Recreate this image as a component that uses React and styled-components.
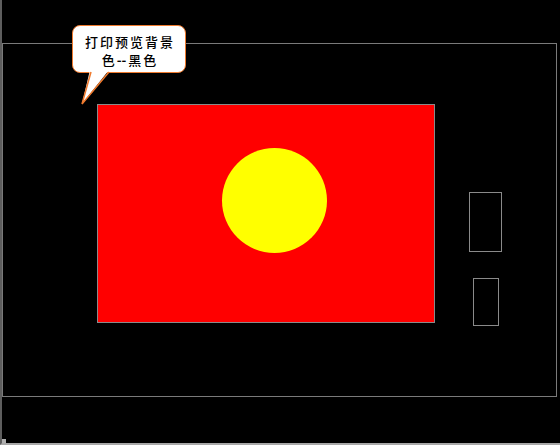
import React from 'react';
import styled, { createGlobalStyle } from 'styled-components';

const GlobalStyle = createGlobalStyle`
  html, body {
    margin: 0;
    padding: 0;
    background: #000000;
  }
  * {
    box-sizing: border-box;
  }
`;

const App = () => {
  return (
    <>
      <GlobalStyle />
      <St.Screen>
        <St.Panel>
          <St.Stage>
            <St.Circle />
          </St.Stage>
          <St.SideColumn>
            <St.SideBox $w={33} $h={60} />
            <St.SideBox $w={26} $h={48} />
          </St.SideColumn>
        </St.Panel>

        <St.Callout>
          <St.Tail width="40" height="80" viewBox="0 0 40 80">
            <polygon points="17,44 36,44 9,78" fill="#ffffff" />
            <polyline
              points="18,46 9,78 36,46"
              fill="none"
              stroke="#ef7a2e"
              strokeWidth="1.5"
              strokeLinejoin="miter"
            />
          </St.Tail>
          <St.CalloutText>
            打印预览背景
            <br />
            色<St.Dashes>--</St.Dashes>黑色
          </St.CalloutText>
        </St.Callout>
        <St.Corner />
      </St.Screen>
    </>
  );
};

export default App;

const St = {
  Screen: styled.div`
    position: relative;
    width: 560px;
    height: 445px;
    background: #000000;
    border-left: 2px solid #5e5e5e;
    border-bottom: 2px solid #a8a8a8;
    overflow: hidden;
  `,

  Panel: styled.div`
    display: flex;
    align-items: flex-start;
    width: 555px;
    height: 354px;
    margin-top: 43px;
    padding: 60px 0 0 94px;
    border: 1px solid #7a7a7a;
  `,

  Stage: styled.div`
    display: flex;
    align-items: flex-start;
    width: 338px;
    height: 219px;
    padding: 43px 0 0 124px;
    background: #ff0000;
    border: 1px solid #8a8a8a;
  `,

  Circle: styled.div`
    width: 105px;
    height: 105px;
    border-radius: 50%;
    background: #ffff00;
  `,

  SideColumn: styled.div`
    display: flex;
    flex-direction: column;
    align-items: center;
    gap: 26px;
    margin: 88px 0 0 34px;
    width: 33px;
  `,

  SideBox: styled.div`
    width: ${(p) => p.$w}px;
    height: ${(p) => p.$h}px;
    border: 1px solid #8a8a8a;
  `,

  Callout: styled.div`
    position: absolute;
    left: 70px;
    top: 25px;
    width: 114px;
    height: 48px;
    background: #ffffff;
    border: 1.5px solid #ef7a2e;
    border-radius: 8px;
  `,

  Tail: styled.svg`
    position: absolute;
    left: 0;
    top: 0;
    overflow: visible;
  `,

  CalloutText: styled.div`
    position: relative;
    padding-top: 7px;
    padding-left: 2px;
    text-align: center;
    font-family: 'Noto Sans CJK SC', 'Liberation Sans', sans-serif;
    font-size: 13px;
    font-weight: 500;
    line-height: 18px;
    letter-spacing: 2px;
    color: #000000;
  `,

  Dashes: styled.span`
    letter-spacing: 0;
    margin-right: 2px;
    font-weight: 700;
  `,

  Corner: styled.div`
    position: absolute;
    left: 0;
    bottom: 0;
    width: 4px;
    height: 4px;
    background: #b0b0b0;
  `,
};
